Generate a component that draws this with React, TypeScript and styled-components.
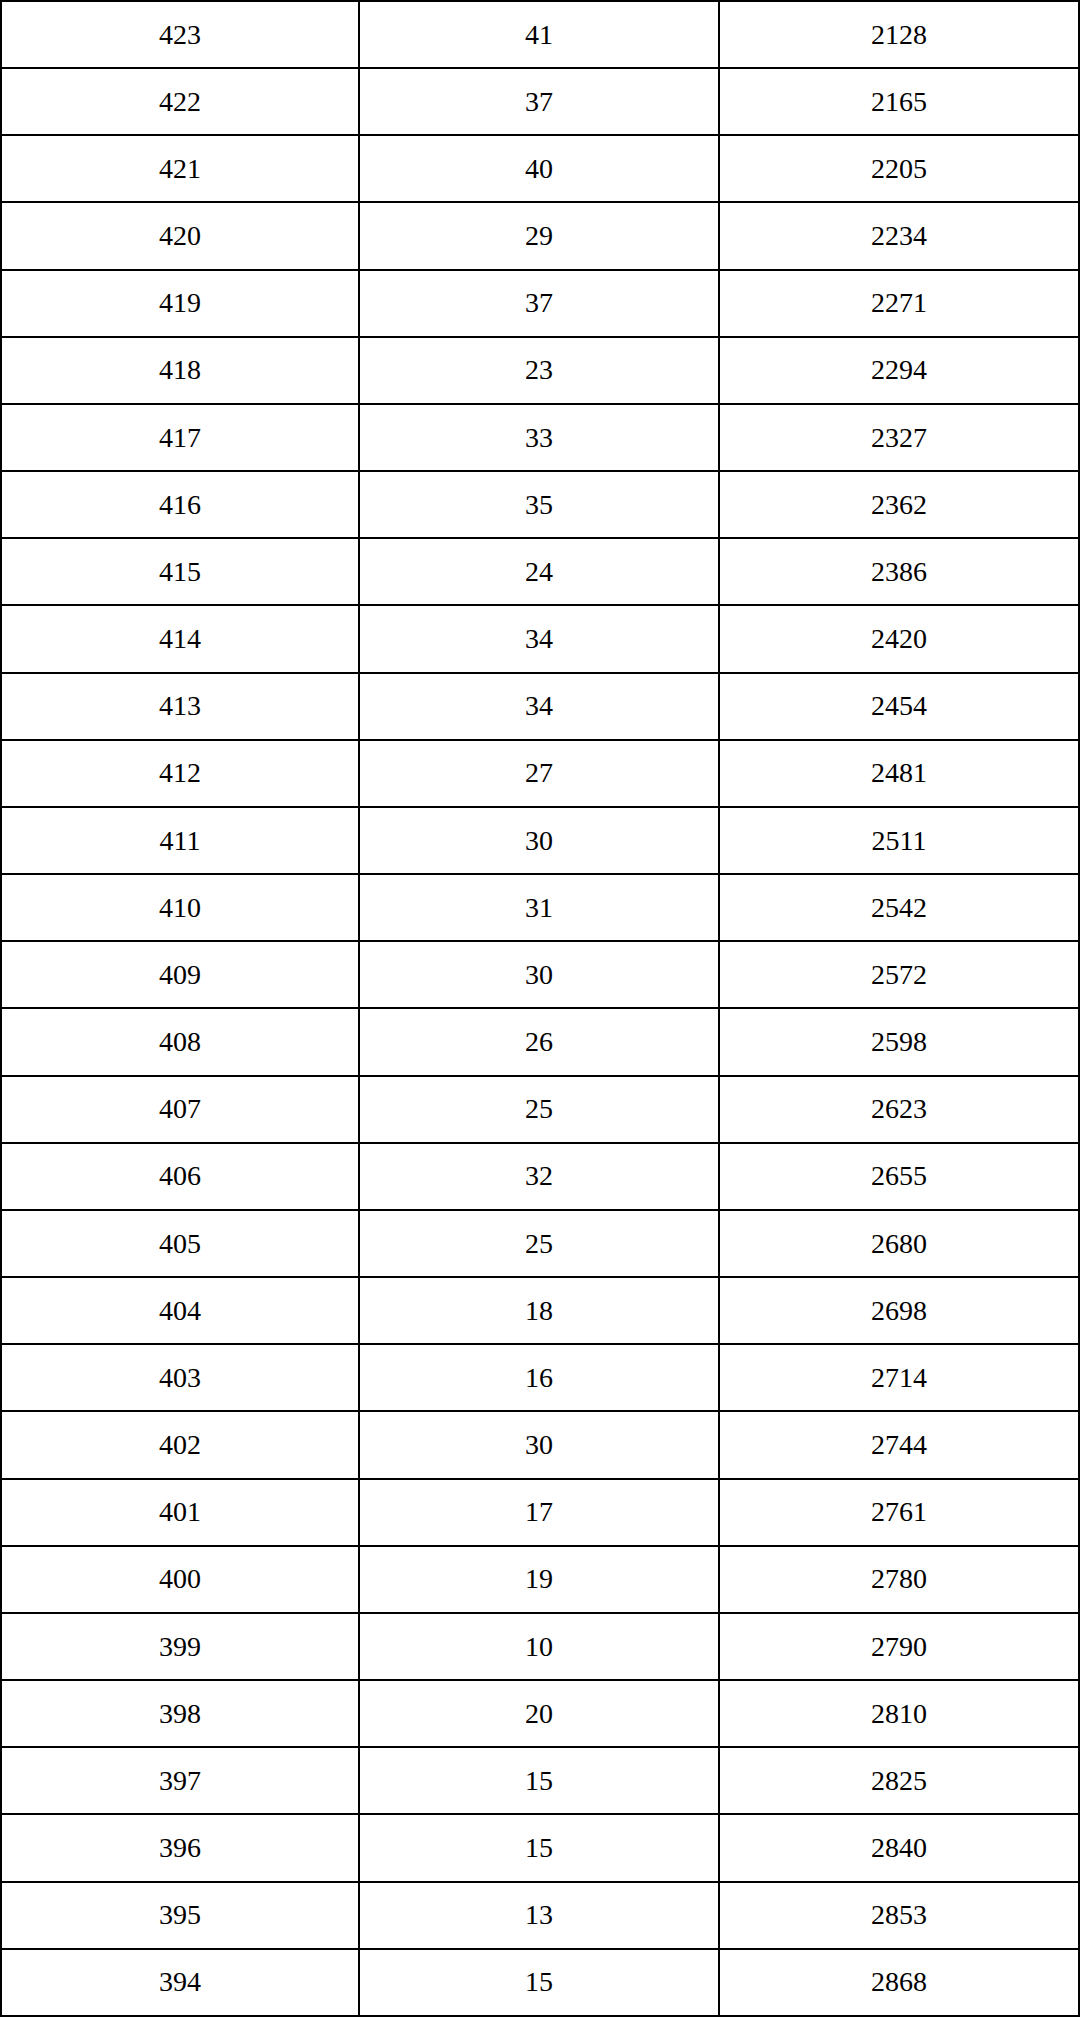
import React from 'react';
import styled, { createGlobalStyle } from 'styled-components';

const GlobalStyle = createGlobalStyle`
  html, body {
    margin: 0;
    padding: 0;
    background: #fff;
  }
`;

const Table = styled.div`
  display: grid;
  grid-template-columns: 356px 358px 358px;
  grid-template-rows: repeat(30, 1fr);
  gap: 2px;
  padding: 2px;
  width: 1080px;
  height: 2017px;
  box-sizing: border-box;
  background: #000;
`;

const Cell = styled.div`
  display: flex;
  align-items: center;
  justify-content: center;
  background: #fff;
  color: #000;
  font-family: "Liberation Serif", "Noto Sans CJK SC", serif;
  font-size: 28px;
  line-height: 1;
`;

const rows: [number, number, number][] = [
  [423, 41, 2128],
  [422, 37, 2165],
  [421, 40, 2205],
  [420, 29, 2234],
  [419, 37, 2271],
  [418, 23, 2294],
  [417, 33, 2327],
  [416, 35, 2362],
  [415, 24, 2386],
  [414, 34, 2420],
  [413, 34, 2454],
  [412, 27, 2481],
  [411, 30, 2511],
  [410, 31, 2542],
  [409, 30, 2572],
  [408, 26, 2598],
  [407, 25, 2623],
  [406, 32, 2655],
  [405, 25, 2680],
  [404, 18, 2698],
  [403, 16, 2714],
  [402, 30, 2744],
  [401, 17, 2761],
  [400, 19, 2780],
  [399, 10, 2790],
  [398, 20, 2810],
  [397, 15, 2825],
  [396, 15, 2840],
  [395, 13, 2853],
  [394, 15, 2868],
];

const App: React.FC = () => (
  <>
    <GlobalStyle />
    <Table>
      {rows.map(([score, count, total]) => (
        <React.Fragment key={score}>
          <Cell>{score}</Cell>
          <Cell>{count}</Cell>
          <Cell>{total}</Cell>
        </React.Fragment>
      ))}
    </Table>
  </>
);

export default App;
